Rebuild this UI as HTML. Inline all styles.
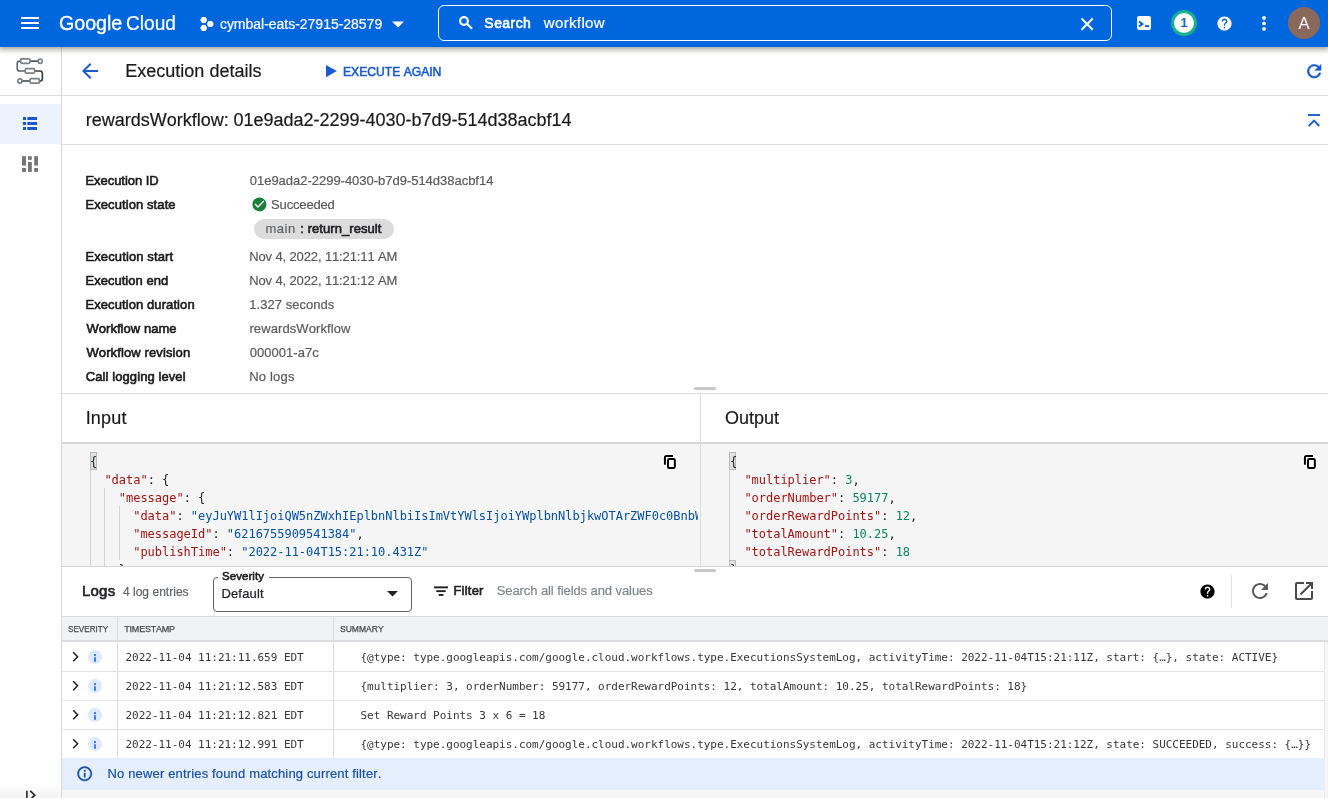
<!DOCTYPE html>
<html lang="en">
<head>
<meta charset="utf-8">
<title>Execution details – Workflows – Google Cloud console</title>
<style>
*{box-sizing:border-box;margin:0;padding:0}
html,body{width:1328px;height:798px;overflow:hidden;background:#fff}
body{font-family:"Liberation Sans",sans-serif;font-size:13px;color:#202124;position:relative}
.abs{position:absolute}
.t{position:absolute;white-space:nowrap;line-height:1;font-kerning:none}
svg{display:block}
#hdr{position:absolute;left:0;top:0;width:1328px;height:47px;background:#0066dd;box-shadow:0 1px 6px 1px rgba(40,36,30,.48);z-index:10;color:#fff;will-change:transform}
#search{position:absolute;left:438px;top:5px;width:674px;height:36px;border:1px solid #fff;border-radius:6px}
#side{position:absolute;left:0;top:47px;width:62px;height:751px;border-right:1px solid #d8d8d8;background:#fff;z-index:2;will-change:transform}
#main{position:absolute;left:0;top:0;width:1328px;height:798px;will-change:transform}
.code{font-family:"DejaVu Sans Mono","Liberation Mono",monospace;font-size:12px;color:#202124;white-space:pre;letter-spacing:-0.024px}
.cl{height:18px;line-height:18px}
.k{color:#a31515}.s{color:#0451a5}.n{color:#098658}
.row{font-family:"DejaVu Sans Mono","Liberation Mono",monospace;font-size:11px;color:#36373a;letter-spacing:-0.022px}
</style>
</head>
<body>
<div id="main">
<svg class="abs" style="left:78px;top:59.3px" width="24" height="24" viewBox="0 0 24 24" fill="#1a5cd0" ><path d="M20 11H7.83l5.59-5.59L12 4l-8 8 8 8 1.41-1.41L7.83 13H20v-2z"/></svg>
<div class="t" style="left:125.32px;top:62.00px;font-size:18px;letter-spacing:0.003px;-webkit-text-stroke:0.2px;color:#1a1a1a;">Execution details</div>
<svg class="abs" style="left:325.8px;top:64.8px" width="11" height="13" viewBox="0 0 11 13" fill="#1a5cd0"><path d="M0 0l10.8 6.1L0 12.2z"/></svg>
<div class="t" style="left:342.61px;top:65.00px;font-size:13px;transform:scaleX(0.9328);transform-origin:0 0;-webkit-text-stroke:0.6px;color:#1a5cd0;">EXECUTE AGAIN</div>
<svg class="abs" style="left:1303.9px;top:60.7px" width="20.4" height="20.4" viewBox="0 0 24 24" fill="#1a5cd0" stroke="#1a5cd0" stroke-width="0.7"><path d="M17.65 6.35C16.2 4.9 14.21 4 12 4c-4.42 0-7.99 3.58-7.99 8s3.57 8 7.99 8c3.73 0 6.84-2.55 7.73-6h-2.08c-.82 2.33-3.04 4-5.65 4-3.31 0-6-2.69-6-6s2.69-6 6-6c1.66 0 3.14.69 4.22 1.78L13 11h7V4l-2.35 2.35z"/></svg>
<div class="abs" style="left:0px;top:95px;width:1328px;height:1px;background:#dddddd"></div>
<div class="t" style="left:85.80px;top:111.00px;font-size:18px;letter-spacing:-0.012px;-webkit-text-stroke:0.2px;color:#1a1a1a;">rewardsWorkflow: 01e9ada2-2299-4030-b7d9-514d38acbf14</div>
<svg class="abs" style="left:1308px;top:114px" width="12" height="13" viewBox="0 0 12 13" fill="none" stroke="#1a5cd0" stroke-width="1.9"><path d="M0 1h12"/><path d="M0.7 12l5.3-5.3 5.3 5.3"/></svg>
<div class="abs" style="left:62px;top:144px;width:1266px;height:1px;background:#dddddd"></div>
<div class="t" style="left:85.43px;top:174.00px;font-size:13px;letter-spacing:-0.047px;-webkit-text-stroke:0.6px;color:#1a1a1a;">Execution ID</div>
<div class="t" style="left:249.79px;top:174.00px;font-size:13px;letter-spacing:-0.021px;-webkit-text-stroke:0.2px;color:#5a5a5a;">01e9ada2-2299-4030-b7d9-514d38acbf14</div>
<div class="t" style="left:85.43px;top:198.00px;font-size:13px;letter-spacing:0.090px;-webkit-text-stroke:0.6px;color:#1a1a1a;">Execution state</div>
<div class="t" style="left:85.43px;top:250.00px;font-size:13px;letter-spacing:0.120px;-webkit-text-stroke:0.6px;color:#1a1a1a;">Execution start</div>
<div class="t" style="left:249.23px;top:250.00px;font-size:13px;letter-spacing:-0.127px;-webkit-text-stroke:0.2px;color:#5a5a5a;">Nov 4, 2022, 11:21:11 AM</div>
<div class="t" style="left:85.43px;top:274.00px;font-size:13px;letter-spacing:0.034px;-webkit-text-stroke:0.6px;color:#1a1a1a;">Execution end</div>
<div class="t" style="left:249.23px;top:274.00px;font-size:13px;letter-spacing:-0.127px;-webkit-text-stroke:0.2px;color:#5a5a5a;">Nov 4, 2022, 11:21:12 AM</div>
<div class="t" style="left:85.43px;top:298.00px;font-size:13px;letter-spacing:0.090px;-webkit-text-stroke:0.6px;color:#1a1a1a;">Execution duration</div>
<div class="t" style="left:249.31px;top:298.00px;font-size:13px;letter-spacing:0.033px;-webkit-text-stroke:0.2px;color:#5a5a5a;">1.327 seconds</div>
<div class="t" style="left:86.44px;top:322.00px;font-size:13px;letter-spacing:0.046px;-webkit-text-stroke:0.6px;color:#1a1a1a;">Workflow name</div>
<div class="t" style="left:249.44px;top:322.00px;font-size:13px;letter-spacing:0.089px;-webkit-text-stroke:0.2px;color:#5a5a5a;">rewardsWorkflow</div>
<div class="t" style="left:86.44px;top:346.00px;font-size:13px;letter-spacing:0.115px;-webkit-text-stroke:0.6px;color:#1a1a1a;">Workflow revision</div>
<div class="t" style="left:249.79px;top:346.00px;font-size:13px;letter-spacing:0.031px;-webkit-text-stroke:0.2px;color:#5a5a5a;">000001-a7c</div>
<div class="t" style="left:85.84px;top:370.00px;font-size:13px;letter-spacing:0.085px;-webkit-text-stroke:0.6px;color:#1a1a1a;">Call logging level</div>
<div class="t" style="left:249.23px;top:370.00px;font-size:13px;letter-spacing:0.193px;-webkit-text-stroke:0.2px;color:#5a5a5a;">No logs</div>
<svg class="abs" style="left:250.5px;top:196.1px" width="16.8" height="16.8" viewBox="0 0 24 24" fill="#188038" ><path d="M12 2C6.48 2 2 6.48 2 12s4.48 10 10 10 10-4.48 10-10S17.52 2 12 2zm-2 15l-5-5 1.41-1.41L10 14.17l7.59-7.59L19 8l-9 9z"/></svg>
<div class="t" style="left:271.11px;top:198.00px;font-size:13px;letter-spacing:-0.165px;-webkit-text-stroke:0.2px;color:#5a5a5a;">Succeeded</div>
<div class="abs" style="left:254px;top:219px;width:140px;height:20px;border-radius:10px;background:#dcdcdc"></div>
<div class="t" style="left:265.54px;top:222.00px;font-size:13px;letter-spacing:0.477px;-webkit-text-stroke:0.2px;color:#5f6368;">main</div>
<div class="t" style="left:300.31px;top:222.00px;font-size:13px;letter-spacing:0.063px;-webkit-text-stroke:0.6px;color:#202124;">: return_result</div>
<div class="abs" style="left:694px;top:387px;width:22px;height:3px;border-radius:2px;background:#c8c8c8"></div>
<div class="abs" style="left:62px;top:393px;width:1266px;height:1px;background:#dddddd"></div>
<div class="t" style="left:85.64px;top:409.00px;font-size:18px;letter-spacing:0.215px;-webkit-text-stroke:0.2px;color:#1a1a1a;">Input</div>
<div class="t" style="left:724.95px;top:409.00px;font-size:18px;letter-spacing:-0.010px;-webkit-text-stroke:0.2px;color:#1a1a1a;">Output</div>
<div class="abs" style="left:62px;top:443px;width:1266px;height:123px;background:#f5f5f5"></div>
<div class="abs" style="left:62px;top:442px;width:1266px;height:2px;background:#d6d6d6"></div>
<div class="abs" style="left:700px;top:394px;width:1px;height:172px;background:#dddddd"></div>
<div class="abs" style="left:62px;top:566px;width:1266px;height:1px;background:#d5d5d5"></div>
<div class="abs" style="left:694px;top:569px;width:22px;height:3px;border-radius:2px;background:#c8c8c8"></div>
<svg class="abs" style="left:660px;top:452px" width="20" height="20" viewBox="660 452 20 20" fill="none" stroke-linejoin="round"><g stroke="#fff" stroke-width="3.6" stroke-linecap="square"><path d="M673 456h-6.6a1.5 1.5 0 0 0-1.5 1.5v7.3"/><rect x="668" y="459" width="6.85" height="9" rx="1.2"/></g><g stroke="#000" stroke-width="2"><path d="M673 456h-6.6a1.5 1.5 0 0 0-1.5 1.5v7.3"/><rect x="668" y="459" width="6.85" height="9" rx="1.2"/></g></svg>
<svg class="abs" style="left:1299.5px;top:452px" width="20" height="20" viewBox="660 452 20 20" fill="none" stroke-linejoin="round"><g stroke="#fff" stroke-width="3.6" stroke-linecap="square"><path d="M673 456h-6.6a1.5 1.5 0 0 0-1.5 1.5v7.3"/><rect x="668" y="459" width="6.85" height="9" rx="1.2"/></g><g stroke="#000" stroke-width="2"><path d="M673 456h-6.6a1.5 1.5 0 0 0-1.5 1.5v7.3"/><rect x="668" y="459" width="6.85" height="9" rx="1.2"/></g></svg>
<div class="abs" style="left:90px;top:452px;width:7px;height:18px;background:#dfe3df;border:1px solid #b9b9b9"></div>
<div class="abs" style="left:729px;top:452px;width:7px;height:18px;background:#dfe3df;border:1px solid #b9b9b9"></div>
<div class="abs" style="left:729px;top:560px;width:7px;height:6px;background:#dfe3df;border:1px solid #b9b9b9;border-bottom:0"></div>
<div class="abs" style="left:90px;top:470px;width:1px;height:96px;background:#d3d3d3"></div>
<div class="abs" style="left:104px;top:488px;width:1px;height:78px;background:#d3d3d3"></div>
<div class="abs" style="left:119px;top:506px;width:1px;height:54px;background:#d3d3d3"></div>
<div class="abs" style="left:729px;top:470px;width:1px;height:90px;background:#d3d3d3"></div>
<div class="abs code" style="left:90px;top:453px;width:608px;height:113px;overflow:hidden"><div class="cl">{</div><div class="cl">  <span class="k">"data"</span>: {</div><div class="cl">    <span class="k">"message"</span>: {</div><div class="cl">      <span class="k">"data"</span>: <span class="s">"eyJuYW1lIjoiQW5nZWxhIEplbnNlbiIsImVtYWlsIjoiYWplbnNlbjkwOTArZWF0c0BnbWFpbC5jb20iLCJhZGRyZXNzIjoiMTg0NSBEZW5pc2UgU3QiLCJjaXR5IjoiTW91bnRhaW4gVmlldyJ9"</span>,</div><div class="cl">      <span class="k">"messageId"</span>: <span class="s">"6216755909541384"</span>,</div><div class="cl">      <span class="k">"publishTime"</span>: <span class="s">"2022-11-04T15:21:10.431Z"</span></div><div class="cl">    },</div></div>
<div class="abs code" style="left:730px;top:453px;width:560px;height:113px;overflow:hidden"><div class="cl">{</div><div class="cl">  <span class="k">"multiplier"</span>: <span class="n">3</span>,</div><div class="cl">  <span class="k">"orderNumber"</span>: <span class="n">59177</span>,</div><div class="cl">  <span class="k">"orderRewardPoints"</span>: <span class="n">12</span>,</div><div class="cl">  <span class="k">"totalAmount"</span>: <span class="n">10.25</span>,</div><div class="cl">  <span class="k">"totalRewardPoints"</span>: <span class="n">18</span></div><div class="cl">}</div></div>
<div class="t" style="left:81.97px;top:583.00px;font-size:15px;letter-spacing:0.215px;-webkit-text-stroke:0.6px;color:#202124;">Logs</div>
<div class="t" style="left:122.92px;top:586.00px;font-size:12px;letter-spacing:0.028px;-webkit-text-stroke:0.2px;color:#5f6368;">4 log entries</div>
<div class="abs" style="left:213px;top:577px;width:199px;height:35px;border:1px solid #5f6368;border-radius:4px"></div>
<div class="abs" style="left:218px;top:576px;width:51px;height:3px;background:#fff"></div>
<div class="t" style="left:221.98px;top:571.25px;font-size:11.5px;letter-spacing:0.072px;-webkit-text-stroke:0.6px;color:#202124;">Severity</div>
<div class="t" style="left:221.43px;top:587.00px;font-size:13px;letter-spacing:0.162px;-webkit-text-stroke:0.2px;color:#202124;">Default</div>
<svg class="abs" style="left:386.5px;top:591px" width="11" height="6" viewBox="0 0 11 6" fill="#202124"><path d="M0 0h11L5.5 5.6z"/></svg>
<svg class="abs" style="left:433px;top:585px" width="16" height="12" viewBox="433 585 16 12" fill="#202124"><rect x="434" y="586.4" width="14" height="1.9"/><rect x="436.3" y="590.2" width="9.4" height="1.9"/><rect x="438.7" y="594" width="4.7" height="1.9"/></svg>
<div class="t" style="left:453.43px;top:584.00px;font-size:13px;letter-spacing:0.219px;-webkit-text-stroke:0.6px;color:#202124;">Filter</div>
<div class="t" style="left:496.71px;top:584.00px;font-size:13px;letter-spacing:-0.085px;-webkit-text-stroke:0.2px;color:#80868b;">Search all fields and values</div>
<svg class="abs" style="left:1198.5px;top:582.5px" width="17" height="17" viewBox="0 0 24 24" fill="#000" ><path d="M12 2C6.48 2 2 6.48 2 12s4.48 10 10 10 10-4.48 10-10S17.52 2 12 2zm1 17h-2v-2h2v2zm2.07-7.75l-.9.92C13.45 12.9 13 13.5 13 15h-2v-.5c0-1.1.45-2.1 1.17-2.83l1.24-1.26c.37-.36.59-.86.59-1.41 0-1.1-.9-2-2-2s-2 .9-2 2H8c0-2.21 1.79-4 4-4s4 1.79 4 4c0 .88-.36 1.68-.93 2.25z"/></svg>
<div class="abs" style="left:1231px;top:575px;width:1px;height:33px;background:#e0e0e0"></div>
<svg class="abs" style="left:1248px;top:579px" width="24" height="24" viewBox="0 0 24 24" fill="#5a5a5a" ><path d="M17.65 6.35C16.2 4.9 14.21 4 12 4c-4.42 0-7.99 3.58-7.99 8s3.57 8 7.99 8c3.73 0 6.84-2.55 7.73-6h-2.08c-.82 2.33-3.04 4-5.65 4-3.31 0-6-2.69-6-6s2.69-6 6-6c1.66 0 3.14.69 4.22 1.78L13 11h7V4l-2.35 2.35z"/></svg>
<svg class="abs" style="left:1292px;top:579px" width="24" height="24" viewBox="0 0 24 24" fill="#4a4a4a" ><path d="M19 19H5V5h7V3H5c-1.11 0-2 .9-2 2v14c0 1.1.89 2 2 2h14c1.1 0 2-.9 2-2v-7h-2v7zM14 3v2h3.59l-9.83 9.83 1.41 1.41L19 6.41V10h2V3h-7z"/></svg>
<div class="abs" style="left:62px;top:616px;width:1266px;height:26px;background:#f1f2f4;border-top:1px solid #dadce0;border-bottom:2px solid #dadce0"></div>
<div class="t" style="left:68.03px;top:624.50px;font-size:9px;transform:scaleX(0.9019);transform-origin:0 0;color:#464a4f;-webkit-text-stroke:0.25px;">SEVERITY</div>
<div class="t" style="left:124.30px;top:624.50px;font-size:9px;letter-spacing:-0.216px;color:#464a4f;-webkit-text-stroke:0.25px;">TIMESTAMP</div>
<div class="t" style="left:339.91px;top:624.50px;font-size:9px;transform:scaleX(0.9472);transform-origin:0 0;color:#464a4f;-webkit-text-stroke:0.25px;">SUMMARY</div>
<div class="abs" style="left:117px;top:617px;width:1px;height:141px;background:#dddddd"></div>
<div class="abs" style="left:333px;top:617px;width:1px;height:141px;background:#dddddd"></div>
<svg class="abs" style="left:70px;top:648.2px" width="11" height="18" viewBox="0 0 11 18" fill="none" stroke="#1c1c1c" stroke-width="1.5"><path d="M3.2 4.3l4.4 4.5-4.4 4.5"/></svg>
<div class="abs" style="left:87.8px;top:649.8px;width:14.6px;height:14.6px;border-radius:50%;background:#dfe9fb"></div>
<svg class="abs" style="left:93.9px;top:653.5px" width="2.2" height="8" viewBox="0 0 2.2 8" fill="#3b80e6"><rect width="2.2" height="2.1"/><rect y="3.3" width="2.2" height="4.5"/></svg>
<div class="t row" style="left:125.5px;top:652px">2022-11-04 11:21:11.659 EDT</div>
<div class="t row" style="left:360.5px;top:652px">{@type: type.googleapis.com/google.cloud.workflows.type.ExecutionsSystemLog, activityTime: 2022-11-04T15:21:11Z, start: {…}, state: ACTIVE}</div>
<div class="abs" style="left:62px;top:671px;width:1266px;height:1px;background:#e0e2e6"></div>
<svg class="abs" style="left:70px;top:677.2px" width="11" height="18" viewBox="0 0 11 18" fill="none" stroke="#1c1c1c" stroke-width="1.5"><path d="M3.2 4.3l4.4 4.5-4.4 4.5"/></svg>
<div class="abs" style="left:87.8px;top:678.8px;width:14.6px;height:14.6px;border-radius:50%;background:#dfe9fb"></div>
<svg class="abs" style="left:93.9px;top:682.5px" width="2.2" height="8" viewBox="0 0 2.2 8" fill="#3b80e6"><rect width="2.2" height="2.1"/><rect y="3.3" width="2.2" height="4.5"/></svg>
<div class="t row" style="left:125.5px;top:681px">2022-11-04 11:21:12.583 EDT</div>
<div class="t row" style="left:360.5px;top:681px">{multiplier: 3, orderNumber: 59177, orderRewardPoints: 12, totalAmount: 10.25, totalRewardPoints: 18}</div>
<div class="abs" style="left:62px;top:700px;width:1266px;height:1px;background:#e0e2e6"></div>
<svg class="abs" style="left:70px;top:706.2px" width="11" height="18" viewBox="0 0 11 18" fill="none" stroke="#1c1c1c" stroke-width="1.5"><path d="M3.2 4.3l4.4 4.5-4.4 4.5"/></svg>
<div class="abs" style="left:87.8px;top:707.8px;width:14.6px;height:14.6px;border-radius:50%;background:#dfe9fb"></div>
<svg class="abs" style="left:93.9px;top:711.5px" width="2.2" height="8" viewBox="0 0 2.2 8" fill="#3b80e6"><rect width="2.2" height="2.1"/><rect y="3.3" width="2.2" height="4.5"/></svg>
<div class="t row" style="left:125.5px;top:710px">2022-11-04 11:21:12.821 EDT</div>
<div class="t row" style="left:360.5px;top:710px">Set Reward Points 3 x 6 = 18</div>
<div class="abs" style="left:62px;top:729px;width:1266px;height:1px;background:#e0e2e6"></div>
<svg class="abs" style="left:70px;top:735.2px" width="11" height="18" viewBox="0 0 11 18" fill="none" stroke="#1c1c1c" stroke-width="1.5"><path d="M3.2 4.3l4.4 4.5-4.4 4.5"/></svg>
<div class="abs" style="left:87.8px;top:736.8px;width:14.6px;height:14.6px;border-radius:50%;background:#dfe9fb"></div>
<svg class="abs" style="left:93.9px;top:740.5px" width="2.2" height="8" viewBox="0 0 2.2 8" fill="#3b80e6"><rect width="2.2" height="2.1"/><rect y="3.3" width="2.2" height="4.5"/></svg>
<div class="t row" style="left:125.5px;top:739px">2022-11-04 11:21:12.991 EDT</div>
<div class="t row" style="left:360.5px;top:739px">{@type: type.googleapis.com/google.cloud.workflows.type.ExecutionsSystemLog, activityTime: 2022-11-04T15:21:12Z, state: SUCCEEDED, success: {…}}</div>
<div class="abs" style="left:62px;top:758px;width:1266px;height:32px;background:#e4eefc"></div>
<svg class="abs" style="left:76.3px;top:765.2px" width="17.4" height="17.4" viewBox="0 0 24 24" fill="#174ea6" stroke="#174ea6" stroke-width="0.5"><path d="M11 7h2v2h-2zm0 4h2v6h-2zm1-9C6.48 2 2 6.48 2 12s4.48 10 10 10 10-4.48 10-10S17.52 2 12 2zm0 18c-4.41 0-8-3.59-8-8s3.59-8 8-8 8 3.59 8 8-3.59 8-8 8z"/></svg>
<div class="t" style="left:107.53px;top:767.00px;font-size:13px;letter-spacing:0.157px;-webkit-text-stroke:0.2px;color:#1a50a8;">No newer entries found matching current filter.</div>
<div class="abs" style="left:62px;top:790px;width:1266px;height:8px;background:#f6f6f6"></div>
<div class="abs" style="left:1324px;top:642px;width:4px;height:156px;background:#f6f6f6;border-left:1px solid #ececec"></div>
</div>
<div id="side">
<svg class="abs" style="left:16px;top:10px" width="28" height="28" viewBox="16 57 28 28" fill="none" stroke-linecap="round">
<path d="M20.6 61.1h-.8a2.6 2.6 0 0 0-2.6 2.6v4.7a2.6 2.6 0 0 0 2.6 2.6h5" stroke="#62676c" stroke-width="1.6"/>
<path d="M30.3 61.1h7.2" stroke="#54585d" stroke-width="1.6"/>
<path d="M35 71h4.8a2.6 2.6 0 0 1 2.6 2.6v4.8a2.6 2.6 0 0 1-2.6 2.6h-.4" stroke="#3c4043" stroke-width="1.7"/>
<path d="M22.6 81h7" stroke="#3c4043" stroke-width="1.7"/>
<rect x="20.6" y="58.9" width="9.4" height="4.4" rx="1.2" stroke="#7d8287" stroke-width="1.7"/>
<rect x="25.2" y="68.7" width="9.4" height="4.4" rx="1.2" stroke="#7d8287" stroke-width="1.7"/>
<rect x="30" y="78.7" width="9.4" height="4.4" rx="1.2" stroke="#7d8287" stroke-width="1.7"/>
<circle cx="40.2" cy="61.2" r="2.1" stroke="#7d8287" stroke-width="1.7"/>
<circle cx="19.9" cy="81" r="2.1" stroke="#7d8287" stroke-width="1.7"/>
</svg>
<div class="abs" style="left:0;top:57px;width:61px;height:40px;background:#ecf3fe"></div>
<svg class="abs" style="left:23px;top:70px" width="14" height="13" viewBox="0 0 14 13" fill="#1a56cf"><rect x="0" y="0" width="3" height="3"/><rect x="4.3" y="0" width="9.7" height="3"/><rect x="0" y="5" width="3" height="3"/><rect x="4.3" y="5" width="9.7" height="3"/><rect x="0" y="10" width="3" height="3"/><rect x="4.3" y="10" width="9.7" height="3"/></svg>
<svg class="abs" style="left:22px;top:109px" width="16" height="16" viewBox="0 0 16 16" fill="#757575"><rect x="0" y="0.2" width="4" height="9.4"/><rect x="0" y="12" width="4" height="3.9"/><rect x="6" y="0.2" width="3.8" height="3.6"/><rect x="6" y="6" width="3.8" height="9.9"/><rect x="12.2" y="0.2" width="3.8" height="9.4"/><rect x="12.2" y="12" width="3.8" height="3.9"/></svg>
<div class="abs" style="left:0;top:48px;width:61px;height:1px;background:#dddddd"></div>
<div class="abs" style="left:0;top:735px;width:61px;height:16px;background:linear-gradient(#fff,#f3f3f3)"></div>
<svg class="abs" style="left:24px;top:743px" width="14" height="10" viewBox="0 0 14 10" fill="none" stroke="#202124" stroke-width="1.6"><path d="M2.9 0.7v10"/><path d="M6.2 0.9l4.6 4.3-4.6 4.3"/></svg>
</div>
<div id="hdr">
<svg class="abs" style="left:21px;top:17px" width="18" height="12" viewBox="0 0 18 12" fill="#fff"><rect y="0" width="18" height="2"/><rect y="5" width="18" height="2"/><rect y="10" width="18" height="2"/></svg>
<div class="t" style="left:58.61px;top:12.00px;font-size:21px;transform:scaleX(0.9342);transform-origin:0 0;color:#fff;-webkit-text-stroke:0.35px;">Google</div>
<div class="t" style="left:126.23px;top:12.00px;font-size:21px;transform:scaleX(0.9114);transform-origin:0 0;-webkit-text-stroke:0.2px;color:#fff;">Cloud</div>
<svg class="abs" style="left:199px;top:16px" width="16" height="16" viewBox="199 16 16 16" fill="#fff"><polygon points="200.20,19.90 201.95,16.90 205.45,16.90 207.20,19.90 205.45,22.90 201.95,22.90"/><polygon points="206.80,24.00 208.55,21.00 212.05,21.00 213.80,24.00 212.05,27.00 208.55,27.00"/><polygon points="200.20,28.05 201.95,25.05 205.45,25.05 207.20,28.05 205.45,31.05 201.95,31.05"/></svg>
<div class="t" style="left:219.91px;top:17.00px;font-size:14px;letter-spacing:-0.018px;-webkit-text-stroke:0.2px;color:#fff;">cymbal-eats-27915-28579</div>
<svg class="abs" style="left:392px;top:21px" width="12" height="7" viewBox="0 0 12 7" fill="#fff"><path d="M0 .5h12L6 6.5z"/></svg>
<div id="search"></div>
<svg class="abs" style="left:456px;top:13px" width="20" height="20" viewBox="456 13 20 20" fill="none" stroke="#fff"><circle cx="464" cy="21" r="3.9" stroke-width="2.2"/><path d="M466.9 23.8l5.2 4.9" stroke-width="2"/></svg>
<div class="t" style="left:484.36px;top:16.00px;font-size:14px;letter-spacing:0.437px;-webkit-text-stroke:0.6px;color:#fff;">Search</div>
<div class="t" style="left:543.72px;top:15.00px;font-size:15px;letter-spacing:0.371px;-webkit-text-stroke:0.2px;color:#fff;">workflow</div>
<svg class="abs" style="left:1078px;top:15px" width="18" height="18" viewBox="1078 15 18 18" fill="none" stroke="#fff" stroke-width="2"><path d="M1081.5 18.5l11.2 11.2M1092.7 18.5l-11.2 11.2"/></svg>
<svg class="abs" style="left:1136px;top:15px" width="16" height="16" viewBox="1136 15 16 16"><rect x="1137" y="16" width="14" height="14" rx="2.2" fill="#fff"/><path d="M1139 21.6l3.4 2.4-3.4 2.4" fill="none" stroke="#0b62d9" stroke-width="2"/><rect x="1145" y="25.2" width="4" height="1.8" fill="#0b62d9"/></svg>
<div class="abs" style="left:1171px;top:10px;width:26px;height:26px;border-radius:50%;background:#fff;border:3px solid #16b292"></div>
<div class="t" style="left:1171px;top:10px;width:26px;height:26px;line-height:26px;text-align:center;font-size:13px;font-weight:700;color:#1a5fd4">1</div>
<svg class="abs" style="left:1215.5px;top:14.5px" width="17" height="17" viewBox="0 0 24 24" fill="#fff" ><path d="M12 2C6.48 2 2 6.48 2 12s4.48 10 10 10 10-4.48 10-10S17.52 2 12 2zm1 17h-2v-2h2v2zm2.07-7.75l-.9.92C13.45 12.9 13 13.5 13 15h-2v-.5c0-1.1.45-2.1 1.17-2.83l1.24-1.26c.37-.36.59-.86.59-1.41 0-1.1-.9-2-2-2s-2 .9-2 2H8c0-2.21 1.79-4 4-4s4 1.79 4 4c0 .88-.36 1.68-.93 2.25z"/></svg>
<svg class="abs" style="left:1262px;top:16px" width="4" height="15" viewBox="0 0 4 15" fill="#fff"><circle cx="2" cy="2" r="1.9"/><circle cx="2" cy="7.4" r="1.9"/><circle cx="2" cy="12.8" r="1.9"/></svg>
<div class="abs" style="left:1288px;top:7px;width:32px;height:32px;border-radius:50%;background:#8b685c"></div>
<div class="t" style="left:1288px;top:7px;width:32px;height:32px;line-height:33px;text-align:center;font-size:16.5px;color:#fff">A</div>
</div>
</body>
</html>
